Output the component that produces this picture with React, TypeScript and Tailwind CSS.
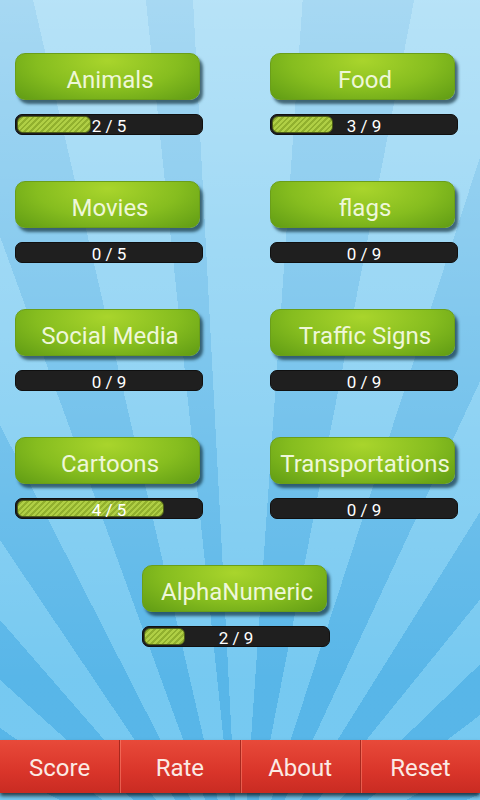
const categories = [
  { name: 'Animals', done: 2, total: 5 },
  { name: 'Food', done: 3, total: 9 },
  { name: 'Movies', done: 0, total: 5 },
  { name: 'flags', done: 0, total: 9 },
  { name: 'Social Media', done: 0, total: 9 },
  { name: 'Traffic Signs', done: 0, total: 9 },
  { name: 'Cartoons', done: 4, total: 5 },
  { name: 'Transportations', done: 0, total: 9 },
]

const menu = ['Score', 'Rate', 'About', 'Reset']

function Category({ name, done, total }: { name: string; done: number; total: number }) {
  const pct = (done / total) * 100
  return (
    <div className="flex flex-col gap-[14px] w-[188px]">
      <button className="w-[185px] h-[47px] rounded-[10px] border border-[#6a9e1a] bg-[radial-gradient(ellipse_at_50%_15%,#a9d52c_0%,#86bd1f_55%,#609c14_100%)] shadow-[3px_4px_3px_rgba(10,40,50,0.65)] text-[24px] leading-none text-[#eef7d8] pt-[6px] pl-[5px] whitespace-nowrap">
        {name}
      </button>
      <div className="relative h-[21px] w-[188px] rounded-[7px] bg-[#1f1f1f] border border-[#101010] p-[1px]">
        {done > 0 && (
          <div
            className="h-full rounded-[6px] border border-[#4d5e16] bg-[repeating-linear-gradient(135deg,#b0cf45_0px,#b0cf45_2px,#91b02e_2px,#91b02e_4px)]"
            style={{ width: `${pct}%` }}
          />
        )}
        <span className="absolute inset-0 flex items-center justify-center pt-[4px] text-[17px] leading-none text-white">
          {done} / {total}
        </span>
      </div>
    </div>
  )
}

export default function App() {
  return (
    <div
      className="w-[480px] h-[800px] flex flex-col overflow-hidden bg-[linear-gradient(to_bottom,rgba(255,255,255,0.5),rgba(255,255,255,0.05)_85%),repeating-conic-gradient(from_-3deg_at_50%_112%,#6fc6f0_0deg,#6fc6f0_7deg,#4fb2e7_7deg,#4fb2e7_14deg)]"
      style={{ fontFamily: 'Roboto, "Noto Sans", sans-serif' }}
    >
      <main className="pt-[53px] px-[15px] grid grid-cols-[188px_188px] gap-x-[67px] gap-y-[46px]">
        {categories.map((c) => (
          <Category key={c.name} {...c} />
        ))}
        <div className="col-span-2 ml-[127px]">
          <Category name="AlphaNumeric" done={2} total={9} />
        </div>
      </main>

      <div className="mt-auto pb-[7px]">
        <nav className="flex h-[53px] shadow-[0_3px_4px_rgba(0,0,0,0.7)]">
          {menu.map((m, i) => (
            <button
              key={m}
              className={`flex-1 flex items-center justify-center bg-[linear-gradient(to_bottom,#e84a3a,#d9352a_60%,#c92b22)] text-[24px] leading-none text-[#fbeae4] pt-[2px] ${
                i > 0 ? 'border-l border-[#a8281e] shadow-[inset_1px_0_0_rgba(255,140,120,0.5)]' : ''
              }`}
            >
              {m}
            </button>
          ))}
        </nav>
      </div>
    </div>
  )
}
